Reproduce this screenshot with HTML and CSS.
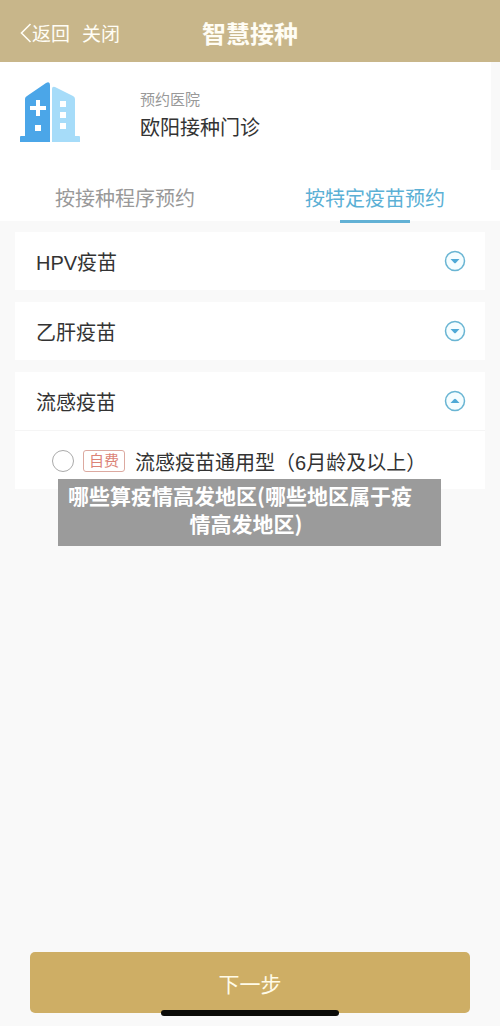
FILE: index.html
```html
<!DOCTYPE html>
<html lang="zh-CN">
<head>
<meta charset="utf-8">
<meta name="viewport" content="width=device-width, initial-scale=1">
<title>智慧接种</title>
<link rel="stylesheet" href="styles.css">
</head>
<body>
<header class="navbar">
  <nav class="nav-actions">
    <button class="nav-btn" type="button">
      <svg class="back-icon" viewBox="0 0 12 20" aria-hidden="true"><path d="M10.500 1 1.500 10l9 9" fill="none" stroke="currentColor" stroke-width="1.600"/></svg>返回</button>
    <button class="nav-btn" type="button">关闭</button>
  </nav>
  <h1 class="nav-title">智慧接种</h1>
</header>

<main class="content">
  <section class="hospital">
    <svg class="hospital-icon" viewBox="0 0 60 60" aria-hidden="true">
      <path d="M0 60v-5q0-1 1-1h4V17q0-2 2-3L26 1q4-2 4 2v57z" fill="#4ba6e8"/>
      <path d="M32 60V7q0-3 3-2l18 9q2 1 2 3v37h4q1 0 1 1v5z" fill="#a6dcf9"/>
      <path d="M16 18h4v6h6v4h-6v6h-4v-6h-6v-4h6zM15 43h6v6h-6zM40 19h6v6h-6zM40 30h6v6h-6zM40 41h6v6h-6z" fill="#fff"/>
    </svg>
    <div class="hospital-info">
      <p class="hospital-label">预约医院</p>
      <p class="hospital-name">欧阳接种门诊</p>
    </div>
  </section>

  <div class="tabs" role="tablist">
    <button class="tab" type="button" role="tab" aria-selected="false">按接种程序预约</button>
    <button class="tab tab-active" type="button" role="tab" aria-selected="true">按特定疫苗预约</button>
  </div>

  <div class="vaccines">
    <section class="card">
      <button class="card-head" type="button" aria-expanded="false">HPV疫苗
        <svg class="toggle" viewBox="0 0 22 22" aria-hidden="true"><circle cx="11" cy="11" r="9.500"/><path d="M6.500 9h9L12 12.800q-1 1-2 0z"/></svg>
      </button>
    </section>
    <section class="card">
      <button class="card-head" type="button" aria-expanded="false">乙肝疫苗
        <svg class="toggle" viewBox="0 0 22 22" aria-hidden="true"><circle cx="11" cy="11" r="9.500"/><path d="M6.500 9h9L12 12.800q-1 1-2 0z"/></svg>
      </button>
    </section>
    <section class="card">
      <button class="card-head" type="button" aria-expanded="true">流感疫苗
        <svg class="toggle" viewBox="0 0 22 22" aria-hidden="true"><circle cx="11" cy="11" r="9.500"/><path d="M6.500 13h9L12 9.200q-1-1-2 0z"/></svg>
      </button>
      <label class="option">
        <input class="radio" type="radio" name="vaccine">
        <span class="tag">自费</span>
        <span>流感疫苗通用型（6月龄及以上）</span>
      </label>
    </section>
    <p class="caption">哪些算疫情高发地区(哪些地区属于疫情高发地区)</p>
  </div>
</main>

<footer class="footer">
  <button class="next" type="button">下一步</button>
  <div class="home-bar"></div>
</footer>
</body>
</html>
```
FILE: styles.css
```css
* {
  box-sizing: border-box;
}

body {
  margin: 0;
  min-height: 100vh;
  display: flex;
  flex-direction: column;
  background: #f9f9f9;
  color: #333;
  font-family: "Noto Sans CJK SC", sans-serif;
  font-size: 20px;
}

button {
  margin: 0;
  padding: 0;
  border: 0;
  background: none;
  color: inherit;
  font: inherit;
}

p,
h1 {
  margin: 0;
}

.navbar {
  display: grid;
  grid-template-columns: 1fr auto 1fr;
  align-items: center;
  height: 62px;
  padding: 3px 20px 0;
  background: #c8b68a;
  color: #fffdf5;
}

.nav-actions {
  display: flex;
  gap: 12px;
}

.nav-btn {
  display: flex;
  align-items: center;
  font-size: 19px;
  line-height: 28px;
}

.back-icon {
  width: 12px;
  height: 20px;
}

.nav-title {
  font-size: 24px;
  line-height: 36px;
  font-weight: 700;
}

.hospital {
  display: flex;
  gap: 60px;
  height: 108px;
  padding: 20px 20px 0;
  background: #fff;
  border-right: 9px solid #f9f9f9;
}

.hospital-icon {
  width: 60px;
  height: 60px;
}

.hospital-info {
  padding-top: 5px;
}

.hospital-label {
  color: #999;
  font-size: 15px;
  line-height: 24px;
}

.hospital-name {
  font-size: 20px;
  line-height: 32px;
}

.tabs {
  display: grid;
  grid-template-columns: 1fr 1fr;
  background: #fff;
}

.tab {
  position: relative;
  height: 51px;
  padding-top: 4px;
  color: #999;
  font-size: 20px;
  line-height: 32px;
}

.tab-active {
  color: #5bb0d5;
}

.tab-active::after {
  content: "";
  position: absolute;
  left: 50%;
  bottom: -2px;
  width: 70px;
  height: 3px;
  margin-left: -35px;
  background: #62b1d5;
}

.vaccines {
  position: relative;
  display: grid;
  gap: 12px;
  padding: 11px 15px 0;
}

.card {
  background: #fff;
}

.card-head {
  display: flex;
  align-items: center;
  justify-content: space-between;
  width: 100%;
  height: 58px;
  padding: 0 19px 0 21px;
  font-family: "Liberation Sans", "Noto Sans CJK SC", sans-serif;
  font-size: 20px;
}

.toggle {
  width: 22px;
  height: 22px;
  fill: #4fa9d6;
}

.toggle circle {
  fill: #f5fdff;
  stroke: #69b5d3;
  stroke-width: 1.5px;
}

.option {
  display: flex;
  align-items: center;
  height: 59px;
  padding: 2px 0 0 37px;
  border-top: 1px solid #f5f5f5;
  font-family: "Liberation Sans", "Noto Sans CJK SC", sans-serif;
  font-size: 20px;
  white-space: nowrap;
}

.radio {
  appearance: none;
  width: 22px;
  height: 22px;
  margin: 0 9px 0 0;
  border: 1px solid #aaa;
  border-radius: 50%;
  background: #fff;
}

.tag {
  height: 22px;
  margin-right: 10px;
  padding: 0 5px;
  border: 1px solid #dca9a0;
  border-radius: 3px;
  color: #dc8377;
  font-size: 15px;
  line-height: 20px;
}

.caption {
  position: absolute;
  top: 258px;
  left: 58px;
  right: 59px;
  padding: 2px 17px 9px 10px;
  background: #9b9b9b;
  color: #fff;
  font-size: 21px;
  font-weight: 700;
  line-height: 28px;
  text-align: left;
  text-align-last: center;
}

.footer {
  position: relative;
  margin-top: auto;
  padding: 20px 30px 13px;
}

.next {
  display: block;
  width: 100%;
  height: 61px;
  border-radius: 5px;
  background: #ceae65;
  color: #fffbe8;
  font-size: 21px;
}

.home-bar {
  position: absolute;
  left: 50%;
  bottom: 10px;
  width: 178px;
  height: 6px;
  margin-left: -89px;
  border-radius: 3px;
  background: #0b0b08;
}
```
